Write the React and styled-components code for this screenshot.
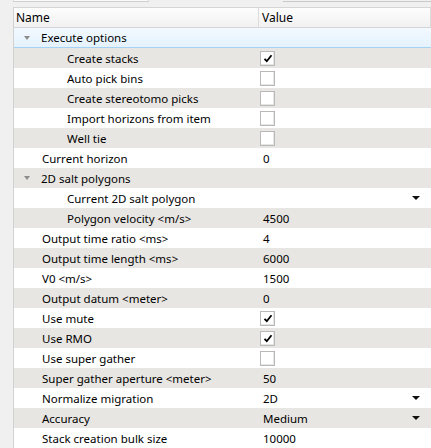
import React from 'react';
import styled, { createGlobalStyle } from 'styled-components';

const GlobalStyle = createGlobalStyle`
	html, body {
		margin: 0;
		padding: 0;
		background: #f0f0f0;
		font-family: "Segoe UI", "Noto Sans", "Liberation Sans", sans-serif;
		font-size: 11.5px;
		color: #000;
	}
`;

const Page = styled.div`
	width: 431px;
	height: 448px;
	overflow: hidden;
	display: flex;
	flex-direction: column;
	background: #f0f0f0;
`;

const TopStrip = styled.div`
	height: 9px;
	display: flex;
	padding-left: 13px;
`;

const TopTab = styled.div`
	width: 134px;
	height: 1px;
	border-left: 1px solid #d9d9d9;
	border-right: 1px solid #d9d9d9;
	border-bottom: 1px solid #d0d0d0;
	background: #fafafa;
`;

const TopLine = styled.div`
	margin-left: 134px;
	flex: 1;
	height: 1px;
	border-bottom: 1px solid #c8c8c8;
`;

const Body = styled.div`
	flex: 1;
	display: flex;
	padding-left: 13px;
`;

const Tree = styled.div`
	flex: 1;
	background: #fff;
	border-left: 1px solid #d2d2d2;
	display: flex;
	flex-direction: column;
`;

const Header = styled.div`
	display: grid;
	grid-template-columns: 245px 1fr;
	height: 19px;
	background: linear-gradient(#fdfdfd, #f1f1f1);
	border-top: 1px solid #d5d5d5;
	border-bottom: 1px solid #d5d5d5;
`;

const HeaderCell = styled.div`
	display: flex;
	align-items: center;
	padding-left: ${(p) => p.$pad}px;
	border-right: 1px solid #dcdcdc;
	font-size: 12px;
`;

const Row = styled.div`
	display: grid;
	grid-template-columns: 245px 1fr;
	height: 20px;
	box-sizing: border-box;
	background: ${(p) => (p.$selected ? 'linear-gradient(#f2f9ff, #e4f2fd)' : p.$alt ? '#e8e6e2' : '#fff')};
	border-bottom: ${(p) => (p.$selected ? '1px solid #a6d2f5' : 'none')};
`;

const NameCell = styled.div`
	display: flex;
	align-items: center;
	padding-left: ${(p) => p.$pad}px;
	white-space: nowrap;
	overflow: hidden;
`;

const Expander = styled.span`
	width: 0;
	height: 0;
	border-left: 3.5px solid transparent;
	border-right: 3.5px solid transparent;
	border-top: 4px solid #8c8c8c;
	margin-right: 11px;
`;

const ValueCell = styled.div`
	display: flex;
	align-items: center;
	justify-content: space-between;
	padding-left: ${(p) => (p.$check ? 1 : 4)}px;
	padding-right: 11px;
`;

const Box = styled.span`
	width: 13px;
	height: 13px;
	border: 1px solid #b9b9b9;
	box-shadow: inset -1px -1px 0 #e6e6e6;
	background: #fff;
	display: flex;
	align-items: center;
	justify-content: center;
`;

const Arrow = styled.span`
	width: 0;
	height: 0;
	border-left: 4px solid transparent;
	border-right: 4px solid transparent;
	border-top: 4px solid #111;
`;

function Check({ on }) {
	return (
		<Box>
			{on && (
				<svg width="10" height="9" viewBox="0 0 10 9">
					<path d="M1.5 4.8 L3.8 7.2 L8.5 1.2" fill="none" stroke="#000" strokeWidth="1.8" />
				</svg>
			)}
		</Box>
	);
}

const rows = [
	{ name: 'Execute options', level: 0, expander: true, selected: true },
	{ name: 'Create stacks', level: 2, check: true, on: true },
	{ name: 'Auto pick bins', level: 2, check: true },
	{ name: 'Create stereotomo picks', level: 2, check: true },
	{ name: 'Import horizons from item', level: 2, check: true },
	{ name: 'Well tie', level: 2, check: true },
	{ name: 'Current horizon', level: 1, value: '0' },
	{ name: '2D salt polygons', level: 0, expander: true },
	{ name: 'Current 2D salt polygon', level: 2, value: '', drop: true },
	{ name: 'Polygon velocity <m/s>', level: 2, value: '4500' },
	{ name: 'Output time ratio <ms>', level: 1, value: '4' },
	{ name: 'Output time length <ms>', level: 1, value: '6000' },
	{ name: 'V0 <m/s>', level: 1, value: '1500' },
	{ name: 'Output datum <meter>', level: 1, value: '0' },
	{ name: 'Use mute', level: 1, check: true, on: true },
	{ name: 'Use RMO', level: 1, check: true, on: true },
	{ name: 'Use super gather', level: 1, check: true },
	{ name: 'Super gather aperture <meter>', level: 1, value: '50' },
	{ name: 'Normalize migration', level: 1, value: '2D', drop: true },
	{ name: 'Accuracy', level: 1, value: 'Medium', drop: true },
	{ name: 'Stack creation bulk size', level: 1, value: '10000' },
];

// left padding of the name column, by depth
const indent = { 0: 10, 1: 28, 2: 53 };

export default function App() {
	return (
		<Page>
			<GlobalStyle />
			<TopStrip>
				<TopTab />
				<TopLine />
			</TopStrip>
			<Body>
				<Tree>
					<Header>
						<HeaderCell $pad={2}>Name</HeaderCell>
						<HeaderCell $pad={3}>Value</HeaderCell>
					</Header>
					{rows.map((r, i) => (
						<Row key={r.name} $selected={r.selected} $alt={i % 2 === 1}>
							<NameCell $pad={indent[r.level]}>
								{r.expander && <Expander />}
								{r.name}
							</NameCell>
							<ValueCell $check={r.check}>
								{r.check ? <Check on={r.on} /> : <span>{r.value}</span>}
								{r.drop && <Arrow />}
							</ValueCell>
						</Row>
					))}
				</Tree>
			</Body>
		</Page>
	);
}
